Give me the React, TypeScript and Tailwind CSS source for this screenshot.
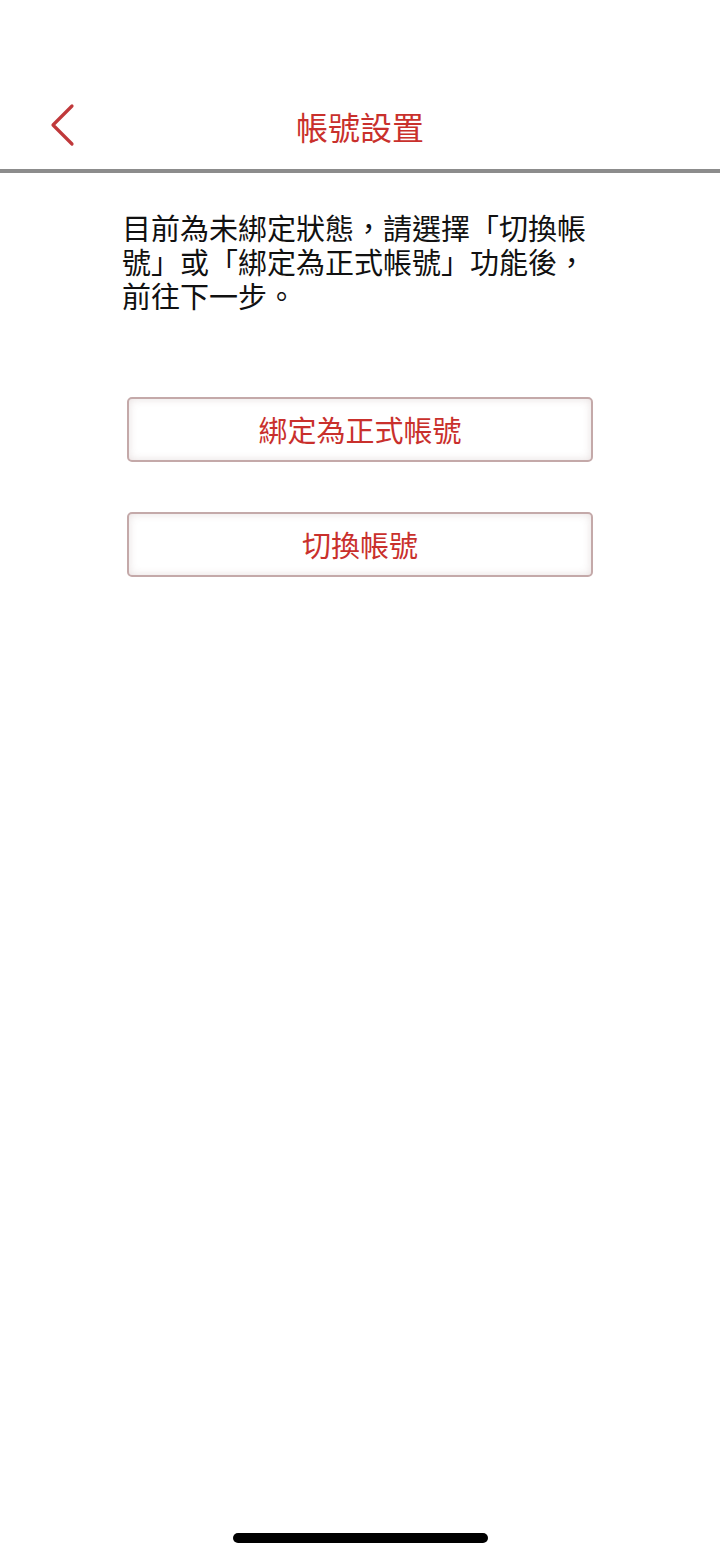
import React from 'react';

const font = { fontFamily: '"Noto Sans CJK TC", "Noto Sans", sans-serif' };

const ActionButton: React.FC<{ label: string }> = ({ label }) => (
  <button
    className="w-full h-[65px] rounded-[5px] border-2 border-[#c4a9a9] bg-white shadow-[inset_0_0_8px_rgba(120,80,80,0.18)] text-[29px] leading-none text-[#c9302c] flex items-center justify-center"
    style={font}
  >
    {label}
  </button>
);

const App: React.FC = () => {
  return (
    <div className="w-[720px] h-[1558px] bg-white flex flex-col relative" style={font}>
      {/* Header */}
      <div className="h-[169px] flex items-end">
        <div className="w-full h-[85px] relative flex items-center justify-center">
          <button className="absolute left-[46px] top-[18px] w-[32px] h-[46px] flex items-center justify-center">
            <svg width="30" height="44" viewBox="0 0 30 44" fill="none">
              <path d="M25 3 L6 22 L25 41" stroke="#c0393b" strokeWidth="3.2" strokeLinecap="round" strokeLinejoin="round" />
            </svg>
          </button>
          <h1 className="text-[32px] leading-none text-[#c9302c] -mt-[2px]">帳號設置</h1>
        </div>
      </div>
      <div className="h-[4px] bg-[#8c8c8c]" />

      {/* Body */}
      <div className="px-[122px] pt-[37px]">
        <p className="text-[29px] leading-[34px] text-[#111] w-[480px]">
          目前為未綁定狀態，請選擇「切換帳號」或「綁定為正式帳號」功能後，前往下一步。
        </p>
      </div>

      <div className="pl-[127px] pr-[127px] mt-[85px] flex flex-col gap-[50px]">
        <ActionButton label="綁定為正式帳號" />
        <ActionButton label="切換帳號" />
      </div>

      {/* Home indicator */}
      <div className="absolute left-[233px] top-[1533px] w-[255px] h-[10px] rounded-full bg-black" />
    </div>
  );
};

export default App;
